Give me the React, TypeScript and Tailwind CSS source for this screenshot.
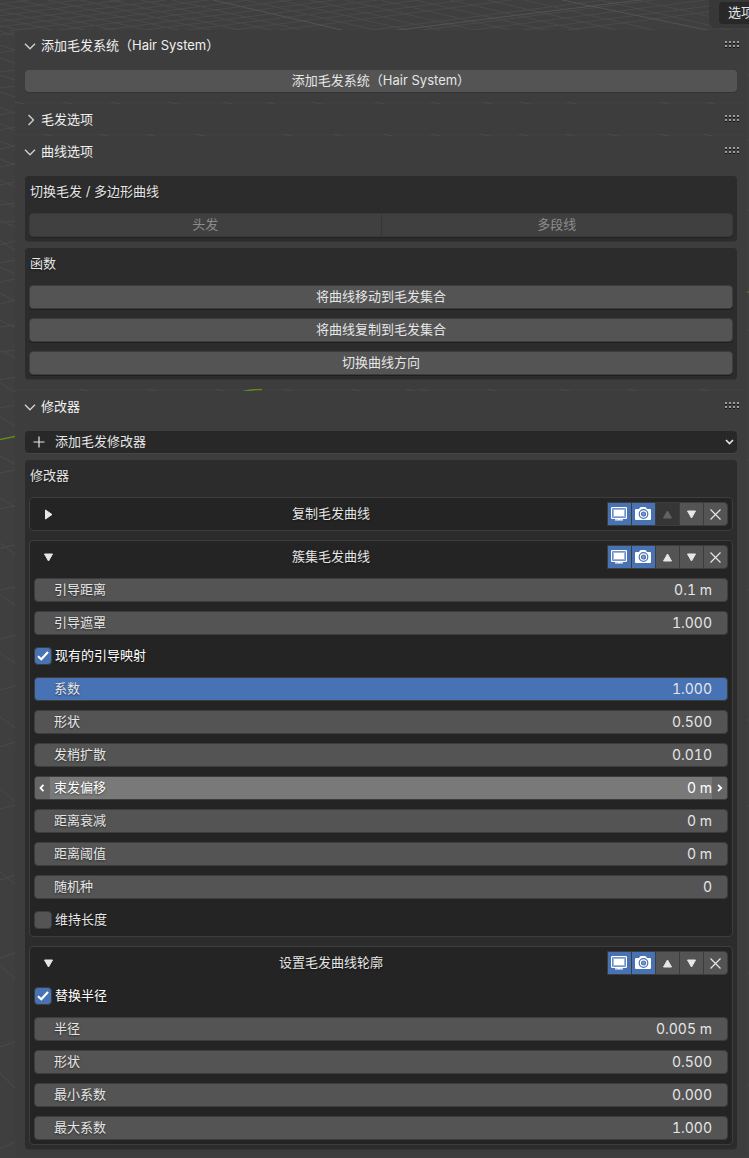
import { useState, type ReactNode } from "react";
import clsx from "clsx";

/* ─── Data ───────────────────────────────────────────────────────────────────── */

type Row =
  | { kind: "number"; label: string; value: string; filled?: boolean; hovered?: boolean }
  | { kind: "check"; label: string; checked: boolean };

type Modifier = { id: string; name: string; open: boolean; first?: boolean; rows: Row[] };

const MODIFIERS: Modifier[] = [
  { id: "duplicate", name: "复制毛发曲线", open: false, first: true, rows: [] },
  {
    id: "clump",
    name: "簇集毛发曲线",
    open: true,
    rows: [
      { kind: "number", label: "引导距离", value: "0.1 m" },
      { kind: "number", label: "引导遮罩", value: "1.000" },
      { kind: "check", label: "现有的引导映射", checked: true },
      { kind: "number", label: "系数", value: "1.000", filled: true },
      { kind: "number", label: "形状", value: "0.500" },
      { kind: "number", label: "发梢扩散", value: "0.010" },
      { kind: "number", label: "束发偏移", value: "0 m", hovered: true },
      { kind: "number", label: "距离衰减", value: "0 m" },
      { kind: "number", label: "距离阈值", value: "0 m" },
      { kind: "number", label: "随机种", value: "0" },
      { kind: "check", label: "维持长度", checked: false },
    ],
  },
  {
    id: "profile",
    name: "设置毛发曲线轮廓",
    open: true,
    rows: [
      { kind: "check", label: "替换半径", checked: true },
      { kind: "number", label: "半径", value: "0.005 m" },
      { kind: "number", label: "形状", value: "0.500" },
      { kind: "number", label: "最小系数", value: "0.000" },
      { kind: "number", label: "最大系数", value: "1.000" },
    ],
  },
];

/* ─── Viewport grid ──────────────────────────────────────────────────────────── */

// left edge of the viewport: y where a line enters and where it meets the sidebar
const LEFT_LINES = [
  [35, 33], [53, 50], [72, 70], [88, 86], [115, 112], [130, 127], [149, 146], [167, 164], [185, 182],
  [205, 203], [223, 221], [245, 241], [263, 260], [282, 279], [304, 300], [327, 325], [352, 350],
  [380, 377], [408, 405], [473, 470], [509, 506], [548, 545], [590, 587], [639, 635], [690, 686],
  [747, 742], [809, 805], [880, 875], [958, 953], [1047, 1042], [1148, 1142],
  [31, 36], [45, 50], [58, 63], [75, 80], [92, 97], [107, 113], [124, 130], [141, 147], [159, 165],
  [180, 187], [200, 207], [220, 227], [241, 250], [267, 274], [293, 301], [320, 328], [350, 358],
  [383, 392], [417, 426], [456, 464], [498, 507], [543, 554], [595, 605], [653, 663], [717, 728],
  [789, 801], [872, 884], [965, 979], [1073, 1088],
];

const DOWN = [-110, -78, -46, -15, 17, 48, 80, 110, 141, 172, 245, 278, 310, 345, 380, 415, 450, 487, 524, 600, 638];
const UP = [-20, 30, 78, 122, 166, 208, 250, 292, 335, 378, 420, 465, 512, 604, 655, 705, 755, 800];

const GAP_DASHES = [
  [15, 102], [62, 102], [110, 102], [168, 102], [222, 102], [265, 102], [312, 102], [374, 102],
  [430, 102], [482, 102], [520, 102], [566, 102], [660, 102], [705, 102],
  [42, 134], [98, 134], [145, 134], [195, 134], [282, 134], [333, 134], [383, 134], [430, 134],
  [480, 134], [518, 134], [565, 134], [608, 134], [659, 134], [703, 134],
  [78, 389], [146, 389], [215, 389], [282, 389], [350, 389], [405, 389], [418, 389], [487, 389],
  [560, 389], [628, 389], [700, 389],
];

function ViewportGrid() {
  return (
    <svg
      aria-hidden="true"
      className="absolute inset-0 h-full w-full"
      viewBox="0 0 749 1158"
      preserveAspectRatio="xMinYMin slice"
      fill="none"
      stroke="#4a4a4a"
    >
      {DOWN.map((x) => (
        <path key={`d${x}`} d={`M${x} 0 L${x + 134} 31`} />
      ))}
      {UP.map((x) => (
        <path key={`u${x}`} d={`M${x} 0 L${x - 240} 31`} />
      ))}
      <path d="M213 0 L346 31 M640 0 L390 31 M562 0 L712 31" stroke="#535353" />
      {LEFT_LINES.map(([a, b]) => (
        <path key={`l${a}-${b}`} d={`M0 ${a} L15 ${b}`} />
      ))}
      {GAP_DASHES.map(([x, y]) => (
        <path key={`g${x}-${y}`} d={`M${x} ${y} L${x + 10} ${y + 2}`} />
      ))}
      <path d="M0 439.500 L15 436.500 M243 391.500 Q252 389 262 389.500" stroke="#5f8a1f" strokeWidth="1.500" />
      <path d="M747 75h2M747 140h2M747 210h2M747 330h2M747 460h2M747 590h2M747 720h2M747 806h2M747 973h2M747 1085h2" />
      <path d="M747 292h2" stroke="#5f8a1f" />
    </svg>
  );
}

/* ─── Icons ──────────────────────────────────────────────────────────────────── */

function Grip() {
  const cells = [0, 4, 8, 12];
  return (
    <svg width="14" height="8" shapeRendering="crispEdges" aria-hidden="true">
      {[0, 4].map((y) =>
        cells.map((x) => (
          <g key={`${x}-${y}`}>
            <rect x={x} y={y} width="2" height="2" fill="#9c9c9c" />
            <rect x={x} y={y + 2} width="2" height="1" fill="#101010" />
          </g>
        ))
      )}
    </svg>
  );
}

function DisplayIcon() {
  return (
    <svg width="16" height="14" viewBox="0 0 16 14" aria-hidden="true">
      <rect x=".6" y=".6" width="14.800" height="10.800" rx=".6" fill="none" stroke="#fff" strokeWidth="1.200" />
      <rect x="2" y="2" width="12" height="8" fill="#9db6dc" />
      <rect x="3" y="3" width="10" height="6" fill="#fff" />
      <path d="M7 11h2v1.300h3v1.200H4v-1.200h3z" fill="#fff" />
    </svg>
  );
}

function CameraIcon() {
  return (
    <svg width="16" height="14" viewBox="0 0 16 14" aria-hidden="true">
      <path d="M1 2h3l1-1.500Q5.400 0 6 0h4q.6 0 1 .5L12 2h3q1 0 1 1v9q0 1-1 1H1q-1 0-1-1V3q0-1 1-1z" fill="#fff" />
      <circle cx="8.500" cy="7" r="4.300" fill="none" stroke="#4772b3" strokeWidth="1.200" />
      <circle cx="8.500" cy="7" r="2" fill="#7d9ccd" stroke="#4772b3" strokeWidth="1.200" />
    </svg>
  );
}

function Triangle({ dir }: { dir: "up" | "down" | "right" }) {
  const d = { up: "M1.500 9 L5.500 2 L9.500 9z", down: "M1.500 2 L9.500 2 L5.500 9z", right: "M2.500 1 L9 5.500 L2.500 10z" }[dir];
  return (
    <svg width="11" height="11" viewBox="0 0 11 11" fill="currentColor" stroke="currentColor" strokeLinejoin="round" aria-hidden="true">
      <path d={d} />
    </svg>
  );
}

function Cross() {
  return (
    <svg width="11" height="11" viewBox="0 0 11 11" fill="none" stroke="currentColor" strokeWidth="1.200" aria-hidden="true">
      <path d="M.5.5l10 10M10.500.5l-10 10" />
    </svg>
  );
}

function Stroke({ d, w, h, width = 1.4 }: { d: string; w: number; h: number; width?: number }) {
  return (
    <svg width={w} height={h} viewBox={`0 0 ${w} ${h}`} fill="none" stroke="currentColor" strokeWidth={width} aria-hidden="true">
      <path d={d} />
    </svg>
  );
}

/* ─── Building blocks ────────────────────────────────────────────────────────── */

function Panel({ title, open = true, className, children }: { title: string; open?: boolean; className?: string; children?: ReactNode }) {
  return (
    <section className={clsx("rounded-sm bg-[#3d3d3d]", className)}>
      <header className="flex h-[30px] items-center justify-between pr-2 pl-[9px]">
        <button type="button" aria-expanded={open} className="flex items-center gap-[5px] text-[#f0f0f0]">
          <span className="flex w-3 justify-center pt-0.5 text-[#d0d0d0]">
            {open ? <Stroke w={12} h={7} d="M1 .8l5 5 5-5" /> : <Stroke w={8} h={12} d="M2.500 1l5 5-5 5" />}
          </span>
          {title}
        </button>
        <Grip />
      </header>
      {children && <div className="pt-2.5 pr-2.5 pl-2.5">{children}</div>}
    </section>
  );
}

function Box({ title, children }: { title: string; children: ReactNode }) {
  return (
    <div className="rounded bg-[#2c2c2c] px-1 pb-1 shadow-[0_1px_0_#343434]">
      <h3 className="flex h-[30px] items-center px-px">{title}</h3>
      <div className="flex flex-col gap-[9px] pt-[7px]">{children}</div>
    </div>
  );
}

function WideButton({ children }: { children: ReactNode }) {
  return (
    <button type="button" className="h-6 w-full rounded border border-[#3d3d3d] bg-[#545454] pb-0.5 shadow-[0_1px_0_#1e1e1e]">
      {children}
    </button>
  );
}

function NumberField({ id, row }: { id: string; row: Extract<Row, { kind: "number" }> }) {
  const { label, value, filled, hovered } = row;
  const arrow = clsx("flex h-full w-[15px] shrink-0 items-center justify-center", hovered && "bg-[#656565]");
  return (
    <div
      className={clsx(
        "flex h-6 items-center overflow-hidden rounded border border-[#3d3d3d]",
        filled ? "bg-[#4772b3]" : hovered ? "bg-[#797979] text-white" : "bg-[#545454]"
      )}
    >
      <span className={arrow}>{hovered && <Stroke w={7} h={8} width={1.8} d="M4.500 .8L1.500 4 4.500 7.200" />}</span>
      <label htmlFor={id} className="shrink-0 pb-0.5 pl-1">
        {label}
      </label>
      <input
        id={id}
        type="text"
        defaultValue={value}
        className="h-full min-w-0 flex-1 bg-transparent pb-0.5 text-right text-sm tabular-nums outline-none"
      />
      <span className={arrow}>{hovered && <Stroke w={6} h={8} width={1.8} d="M1 .8L4.200 4 1 7.200" />}</span>
    </div>
  );
}

function CheckRow({ row }: { row: Extract<Row, { kind: "check" }> }) {
  const [checked, setChecked] = useState(row.checked);
  return (
    <label className={clsx("flex h-6 items-center gap-[3px]", checked && "text-white")}>
      <span className="grid">
        <input
          type="checkbox"
          checked={checked}
          onChange={(e) => setChecked(e.target.checked)}
          className="col-start-1 row-start-1 size-[18px] appearance-none rounded border border-[#3d3d3d] bg-[#545454] checked:bg-[#4772b3]"
        />
        {checked && (
          <span className="pointer-events-none col-start-1 row-start-1 grid place-items-center">
            <Stroke w={12} h={10} width={2.2} d="M1 5.200l3.300 3L11 1" />
          </span>
        )}
      </span>
      <span className="pb-0.5">{row.label}</span>
    </label>
  );
}

const TOOL = "-ml-px flex h-6 w-[25px] items-center justify-center border border-[#3d3d3d]";

function ModifierCard({ mod }: { mod: Modifier }) {
  return (
    <article className="flex flex-col gap-[9px] rounded border border-[#3d3d3d] bg-[#242424] p-1">
      <div className="flex">
        <button type="button" aria-label="展开" aria-expanded={mod.open} className="flex h-6 w-7 shrink-0 items-center justify-center">
          <Triangle dir={mod.open ? "down" : "right"} />
        </button>
        <h4 className="flex h-6 flex-1 items-center justify-center pb-0.5">{mod.name}</h4>
        <div className="flex pl-2">
          <button type="button" aria-label="视图显示" className={clsx(TOOL, "bg-[#4772b3] pr-px")}>
            <DisplayIcon />
          </button>
          <button type="button" aria-label="渲染" className={clsx(TOOL, "bg-[#4772b3] pr-px")}>
            <CameraIcon />
          </button>
          <button type="button" aria-label="上移" disabled={mod.first} className={clsx(TOOL, mod.first ? "bg-[#363636] text-[#636363]" : "bg-[#545454]")}>
            <Triangle dir="up" />
          </button>
          <button type="button" aria-label="下移" className={clsx(TOOL, "bg-[#545454]")}>
            <Triangle dir="down" />
          </button>
          <button type="button" aria-label="移除" className={clsx(TOOL, "rounded-r bg-[#545454]")}>
            <Cross />
          </button>
        </div>
      </div>
      {mod.open &&
        mod.rows.map((row, i) =>
          row.kind === "number" ? (
            <NumberField key={row.label} id={`${mod.id}-${i}`} row={row} />
          ) : (
            <CheckRow key={row.label} row={row} />
          )
        )}
    </article>
  );
}

/* ─── Page ───────────────────────────────────────────────────────────────────── */

export default function App() {
  return (
    <div className="relative min-h-screen overflow-hidden bg-[#3f3f3f] font-[Inter,'Noto_Sans_CJK_SC',sans-serif] text-[13px] leading-5 text-[#e6e6e6] [text-shadow:0_1px_2px_rgb(0_0_0/0.5)]">
      <ViewportGrid />

      <div className="relative">
        <div className="flex h-[30px] items-start justify-end">
          <div className="h-7 w-10 overflow-hidden rounded-bl-md bg-[#383838] pt-0.5 pl-2.5">
            <button type="button" className="h-[22px] w-16 rounded bg-[#282828] pb-0.5 pl-[9px] text-left">
              选项
            </button>
          </div>
        </div>

        <main className="flex flex-col gap-0.5 pr-0.5 pl-[15px]">
          <Panel title="添加毛发系统（Hair System）" className="pb-2.5">
            <button type="button" className="h-[22px] w-full rounded bg-[#545454] pb-0.5 shadow-[0_1px_0_#333333]">
              添加毛发系统（Hair System）
            </button>
          </Panel>

          <Panel title="毛发选项" open={false} />

          <Panel title="曲线选项" className="pb-2.5">
            <div className="flex flex-col gap-[7px]">
              <Box title="切换毛发 / 多边形曲线">
                <div className="flex h-6 divide-x divide-[#363636] rounded border border-[#383838] bg-[#404040] text-[#8c8c8c] shadow-[0_1px_0_#242424]">
                  <button type="button" disabled className="flex-1 pb-0.5">
                    头发
                  </button>
                  <button type="button" disabled className="flex-1 pb-0.5">
                    多段线
                  </button>
                </div>
              </Box>
              <Box title="函数">
                <WideButton>将曲线移动到毛发集合</WideButton>
                <WideButton>将曲线复制到毛发集合</WideButton>
                <WideButton>切换曲线方向</WideButton>
              </Box>
            </div>
          </Panel>

          <Panel title="修改器" className="pb-2">
            <div className="flex flex-col gap-[7px]">
              <div className="flex h-[22px] items-center rounded bg-[#282828] pr-[3px] pl-2 shadow-[0_1px_0_#454545]">
                <Stroke w={12} h={12} width={1.2} d="M6 .5v11M.5 6h11" />
                <select aria-label="添加毛发修改器" className="h-full flex-1 appearance-none bg-transparent pb-0.5 pl-2.5 outline-none">
                  <option>添加毛发修改器</option>
                </select>
                <Stroke w={9} h={6} width={1.6} d="M1 1l3.500 3.500L8 1" />
              </div>
              <Box title="修改器">
                {MODIFIERS.map((mod) => (
                  <ModifierCard key={mod.id} mod={mod} />
                ))}
              </Box>
            </div>
          </Panel>
        </main>
      </div>
    </div>
  );
}
